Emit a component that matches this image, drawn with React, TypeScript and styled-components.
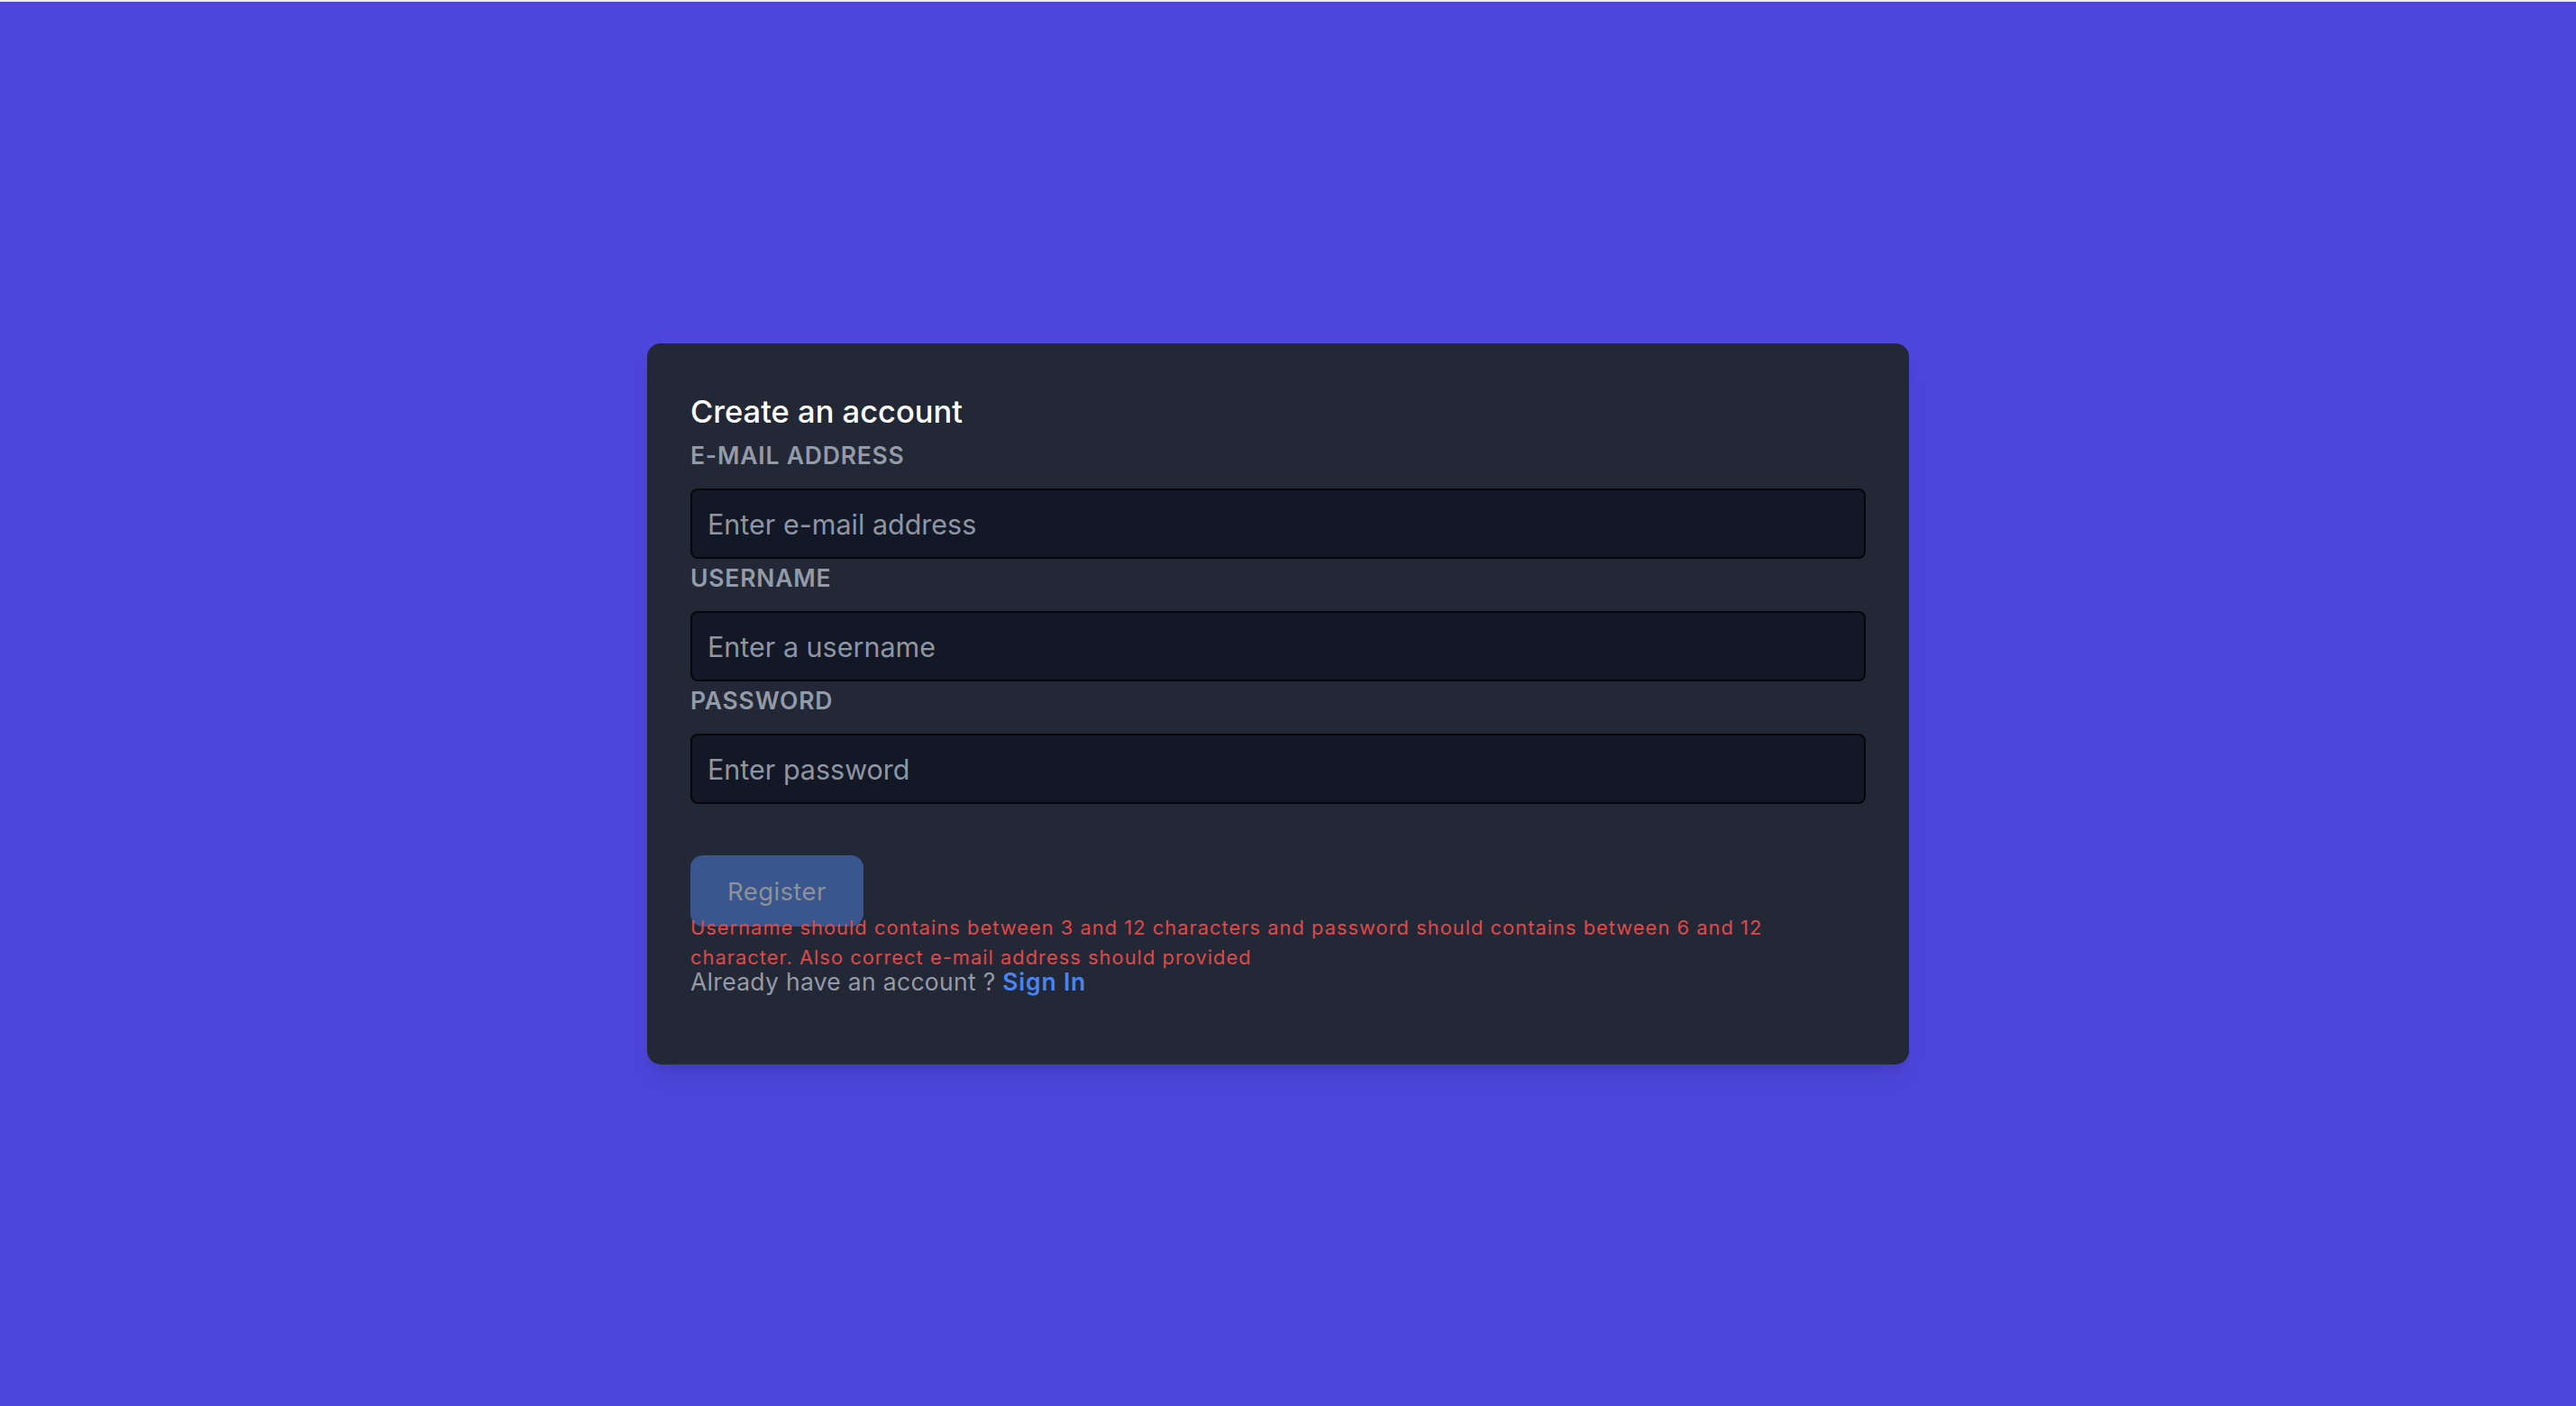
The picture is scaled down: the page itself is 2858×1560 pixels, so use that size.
import React from "react";
import styled, { createGlobalStyle } from "styled-components";

const GlobalStyle = createGlobalStyle`
  html, body {
    margin: 0;
    padding: 0;
    background: #ececec;
  }
  * { box-sizing: border-box; }
  body {
    font-family: Inter, "Noto Sans", "Liberation Sans", sans-serif;
  }
`;

const Page = styled.main`
  margin-top: 2px;
  height: 1558px;
  background: #4e46dc;
  display: flex;
  align-items: center;
  justify-content: center;
  padding-right: 22px;
`;

const Card = styled.section`
  width: 1400px;
  background: #222836;
  border-radius: 15px;
  padding: 52px 48px 81px;
  display: flex;
  flex-direction: column;
  box-shadow: 0 18px 27px -5px rgba(0, 0, 0, 0.1), 0 7px 11px -6px rgba(0, 0, 0, 0.1);
`;

const Title = styled.h1`
  margin: 0 0 6px;
  font-size: 34.5px;
  line-height: 48px;
  font-weight: 500;
  color: #ffffff;
`;

const Form = styled.form`
  display: flex;
  flex-direction: column;
  gap: 3px;
`;

const Field = styled.div`
  display: flex;
  flex-direction: column;
  gap: 19px;
`;

const Label = styled.label`
  display: block;
  font-size: 26.5px;
  line-height: 36px;
  font-weight: 600;
  letter-spacing: 0.8px;
  color: #949ba8;
  text-transform: uppercase;
`;

const Input = styled.input`
  width: 100%;
  height: 78px;
  background: #131826;
  border: 2px solid #05070c;
  border-radius: 8px;
  padding: 0 17px;
  font-family: inherit;
  font-size: 30.5px;
  color: #e5e7eb;
  outline: none;
  &::placeholder {
    color: #8e95a3;
  }
`;

const Actions = styled.div`
  display: flex;
  flex-direction: column;
  margin-top: 57px;
`;

const ButtonRow = styled.div`
  display: flex;
`;

const RegisterButton = styled.button`
  height: 79px;
  padding: 0 41px;
  border: none;
  border-radius: 14px;
  background: #39568f;
  color: #8e9197;
  font-family: inherit;
  font-size: 27.5px;
  font-weight: 400;
  letter-spacing: 0.4px;
  cursor: not-allowed;
`;

const ErrorText = styled.p`
  margin: -15px 0 0;
  font-size: 21.8px;
  line-height: 32.5px;
  letter-spacing: 1.05px;
  color: #e04848;
`;

const Footer = styled.p`
  margin: 0;
  font-size: 26.5px;
  line-height: 22px;
  letter-spacing: 0.3px;
  color: #959ba7;
`;

const SignIn = styled.a`
  color: #4b83f0;
  font-weight: 600;
  letter-spacing: 0.8px;
  text-decoration: none;
`;

export default function App() {
  return (
    <>
      <GlobalStyle />
      <Page>
        <Card>
          <Title>Create an account</Title>
          <Form onSubmit={(e) => e.preventDefault()}>
            <Field>
              <Label htmlFor="email">E-mail address</Label>
              <Input id="email" type="email" placeholder="Enter e-mail address" />
            </Field>
            <Field>
              <Label htmlFor="username">Username</Label>
              <Input id="username" type="text" placeholder="Enter a username" />
            </Field>
            <Field>
              <Label htmlFor="password">Password</Label>
              <Input id="password" type="password" placeholder="Enter password" />
            </Field>
          </Form>
          <Actions>
            <ButtonRow>
              <RegisterButton type="button">Register</RegisterButton>
            </ButtonRow>
            <ErrorText>
              Username should contains between 3 and 12 characters and password should contains between 6 and 12
              <br />
              character. Also correct e-mail address should provided
            </ErrorText>
            <Footer>
              Already have an account ? <SignIn href="#">Sign In</SignIn>
            </Footer>
          </Actions>
        </Card>
      </Page>
    </>
  );
}
